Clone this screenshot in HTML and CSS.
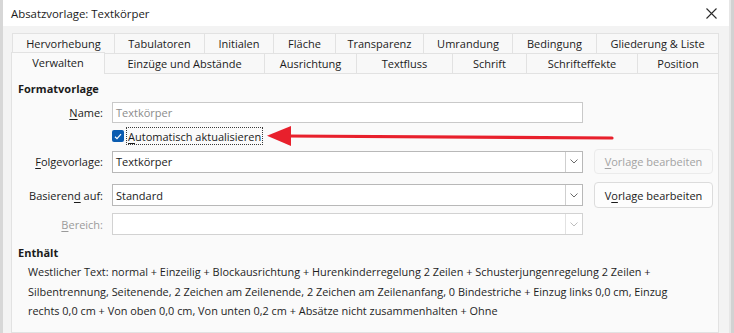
FILE: index.html
```html
<!DOCTYPE html>
<html lang="de">
<head>
<meta charset="utf-8">
<title>Absatzvorlage: Textkörper</title>
<link rel="stylesheet" href="styles.css">
</head>
<body>
<div class="screen">
  <div class="edge-left"></div>
  <div class="window">
    <div class="titlebar">
      <span class="title">Absatzvorlage: Textkörper</span>
      <svg class="close" width="11" height="11" viewBox="0 0 11 11"><path d="M0.5 0.5 L10.5 10.5 M10.5 0.5 L0.5 10.5" stroke="#2b2b2b" stroke-width="1.1" fill="none"/></svg>
    </div>
    <div class="body">
      <div class="tabs row1">
        <div class="tab">Hervorhebung</div>
        <div class="tab">Tabulatoren</div>
        <div class="tab">Initialen</div>
        <div class="tab">Fläche</div>
        <div class="tab">Transparenz</div>
        <div class="tab">Umrandung</div>
        <div class="tab">Bedingung</div>
        <div class="tab last">Gliederung &amp; Liste</div>
      </div>
      <div class="tabs row2">
        <div class="tab selected">Verwalten</div>
        <div class="tab">Einzüge und Abstände</div>
        <div class="tab">Ausrichtung</div>
        <div class="tab">Textfluss</div>
        <div class="tab">Schrift</div>
        <div class="tab">Schrifteffekte</div>
        <div class="tab last">Position</div>
      </div>
      <div class="panel">
        <div class="section">Formatvorlage</div>
        <div class="frow r-name">
          <span class="lbl"><u>N</u>ame:</span>
          <div class="field placeholder">Textkörper</div>
        </div>
        <div class="frow r-check">
          <span></span>
          <div class="checkline">
            <span class="checkbox"><svg width="8" height="7" viewBox="0 0 8 7"><path d="M1 3.8 L3 5.6 L7 1.2" stroke="#fff" stroke-width="1.2" fill="none"/></svg></span>
            <span class="focus"><u>A</u>utomatisch aktualisieren</span>
          </div>
        </div>
        <div class="frow r-folge">
          <span class="lbl"><u>F</u>olgevorlage:</span>
          <div class="combo"><span class="ctext">Textkörper</span><span class="drop"><svg width="8" height="5" viewBox="0 0 8 5"><path d="M0.5 0.5 L4 4 L7.5 0.5" stroke="#6b6b6b" stroke-width="1" fill="none"/></svg></span></div>
          <div class="btn disabled"><u>V</u>orlage bearbeiten</div>
        </div>
        <div class="frow r-basis">
          <span class="lbl">Basieren<u>d</u> auf:</span>
          <div class="combo"><span class="ctext">Standard</span><span class="drop"><svg width="8" height="5" viewBox="0 0 8 5"><path d="M0.5 0.5 L4 4 L7.5 0.5" stroke="#6b6b6b" stroke-width="1" fill="none"/></svg></span></div>
          <div class="btn">V<u>o</u>rlage bearbeiten</div>
        </div>
        <div class="frow r-bereich">
          <span class="lbl dim"><u>B</u>ereich:</span>
          <div class="combo dis"><span class="ctext"></span><span class="drop"><svg width="8" height="5" viewBox="0 0 8 5"><path d="M0.5 0.5 L4 4 L7.5 0.5" stroke="#bdbdbd" stroke-width="1" fill="none"/></svg></span></div>
        </div>
        <div class="section enthaelt">Enthält</div>
        <p class="desc">
          <span class="ln">Westlicher Text: normal + Einzeilig + Blockausrichtung + Hurenkinderregelung 2 Zeilen + Schusterjungenregelung 2 Zeilen +</span>
          <span class="ln">Silbentrennung, Seitenende, 2 Zeichen am Zeilenende, 2 Zeichen am Zeilenanfang, 0 Bindestriche + Einzug links 0,0 cm, Einzug</span>
          <span class="ln">rechts 0,0 cm + Von oben 0,0 cm, Von unten 0,2 cm + Absätze nicht zusammenhalten + Ohne</span>
        </p>
      </div>
    </div>
  </div>
  <div class="edge-right"></div>
  <svg class="arrow" width="734" height="333" viewBox="0 0 734 333">
    <path d="M286 136 L612 138" stroke="#e8202c" stroke-width="3.2" stroke-linecap="round" fill="none"/>
    <path d="M267 135.8 L291 126 L291 146 Z" fill="#e8202c"/>
  </svg>
</div>
</body>
</html>
```
FILE: styles.css
```css
* { box-sizing: border-box; }
html, body { margin: 0; padding: 0; }
body {
  font-family: "Open Sans", "Noto Sans", sans-serif;
  font-size: 11px;
  color: #1b1b1b;
  background: #e2e2e2;
}
.screen {
  position: relative;
  width: 734px;
  height: 333px;
  overflow: hidden;
  display: flex;
}
.edge-left {
  flex: 0 0 3px;
  background: #d7d7d7;
}
.window {
  flex: 0 0 726px;
  display: flex;
  flex-direction: column;
  background: #f3f3f3;
}
.edge-right {
  flex: 1;
  background: linear-gradient(to right, #e6e6e6 0 2px, #d2d2d2 2px);
}
.titlebar {
  height: 26px;
  flex: 0 0 26px;
  background: #ffffff;
  display: flex;
  align-items: center;
  justify-content: space-between;
  padding: 0 12px 0 8px;
}
.title {
  font-size: 11.4px;
  color: #1a1a1a;
}
.close { display: block; margin-top: 1px; }

.body {
  flex: 1;
  padding: 7px 10px 0 8px;
  display: flex;
  flex-direction: column;
}
.tabs {
  display: grid;
  height: 20px;
}
.row1 {
  margin-left: 1px;
  grid-template-columns: 102px 90px 69px 62px 88px 89px 84px 123px;
}
.row2 {
  grid-template-columns: 93px 160px 92px 96px 74px 111px 82px;
}
.tab {
  background: #f8f8f8;
  border-top: 1px solid #e2e2e2;
  border-left: 1px solid #e2e2e2;
  display: flex;
  align-items: center;
  justify-content: center;
  white-space: nowrap;
  font-size: 11px;
  color: #1b1b1b;
  padding-bottom: 1px;
}
.tab.last { border-right: 1px solid #e2e2e2; }
.tab.selected {
  position: relative;
  z-index: 1;
  background: #fafafa;
  margin-top: -1px;
  margin-bottom: -1px;
  border-right: 1px solid #e2e2e2;
  margin-right: -1px;
  padding-bottom: 2px;
}
.panel {
  flex: 1;
  width: 708px;
  background: #fafafa;
  border: 1px solid #e2e2e2;
  padding: 7px 0 0 6px;
}
.section {
  font-weight: 700;
  font-size: 11px;
  line-height: 16px;
  height: 16px;
}
.frow {
  display: grid;
  grid-template-columns: 94px 471px auto;
  align-items: center;
}
.lbl {
  text-align: right;
  padding-right: 9px;
  white-space: nowrap;
}
.lbl.dim { color: #9a9a9a; }
u { text-decoration-thickness: 1px; text-underline-offset: 2px; }

.r-name { margin-top: 5px; height: 21px; }
.r-check { margin-top: 4px; height: 18px; }
.r-folge { margin-top: 4px; height: 25px; }
.r-basis { margin-top: 8px; height: 26px; }
.r-bereich { margin-top: 5px; height: 22px; }

.field {
  height: 21px;
  background: #ffffff;
  border: 1px solid #c9c9c9;
  padding: 0 3px;
  display: flex;
  align-items: center;
}
.field.placeholder { color: #8c8c8c; }

.checkline {
  display: flex;
  align-items: center;
  height: 18px;
}
.checkbox {
  width: 12px;
  height: 12px;
  border-radius: 2px;
  background: #0b5cb0;
  display: flex;
  align-items: center;
  justify-content: center;
  margin-right: 2px;
}
.checkbox svg { display: block; }
.focus {
  border: 1px dotted #3a3a3a;
  height: 18px;
  padding: 0 1px 0 1px;
  display: flex;
  align-items: center;
  white-space: nowrap;
}

.combo {
  height: 22px;
  background: #ffffff;
  border: 1px solid #b8b8b8;
  display: flex;
  align-items: stretch;
}
.combo.dis { border-color: #d2d2d2; }
.ctext {
  flex: 1;
  padding-left: 3px;
  display: flex;
  align-items: center;
}
.drop {
  flex: 0 0 17px;
  border-left: 1px solid #cfcfcf;
  display: flex;
  align-items: center;
  justify-content: center;
}
.combo.dis .drop { border-left-color: #e2e2e2; }
.drop svg { display: block; }

.btn {
  margin-left: 11px;
  width: 119px;
  height: 100%;
  border: 1px solid #dcdcdc;
  border-radius: 4px;
  background: #fdfdfd;
  display: flex;
  align-items: center;
  justify-content: center;
  white-space: nowrap;
}
.btn.disabled {
  color: #a3a3a3;
  border-color: #ebebeb;
  background: #f9f9f9;
}

.enthaelt { margin-top: 10px; }
.desc {
  margin: 1px 0 0 0;
  padding-left: 10px;
  line-height: 19.5px;
  font-size: 10.9px;
  color: #1e1e1e;
}
.ln { display: block; white-space: nowrap; }

.arrow {
  position: absolute;
  left: 0;
  top: 0;
  pointer-events: none;
}
```
